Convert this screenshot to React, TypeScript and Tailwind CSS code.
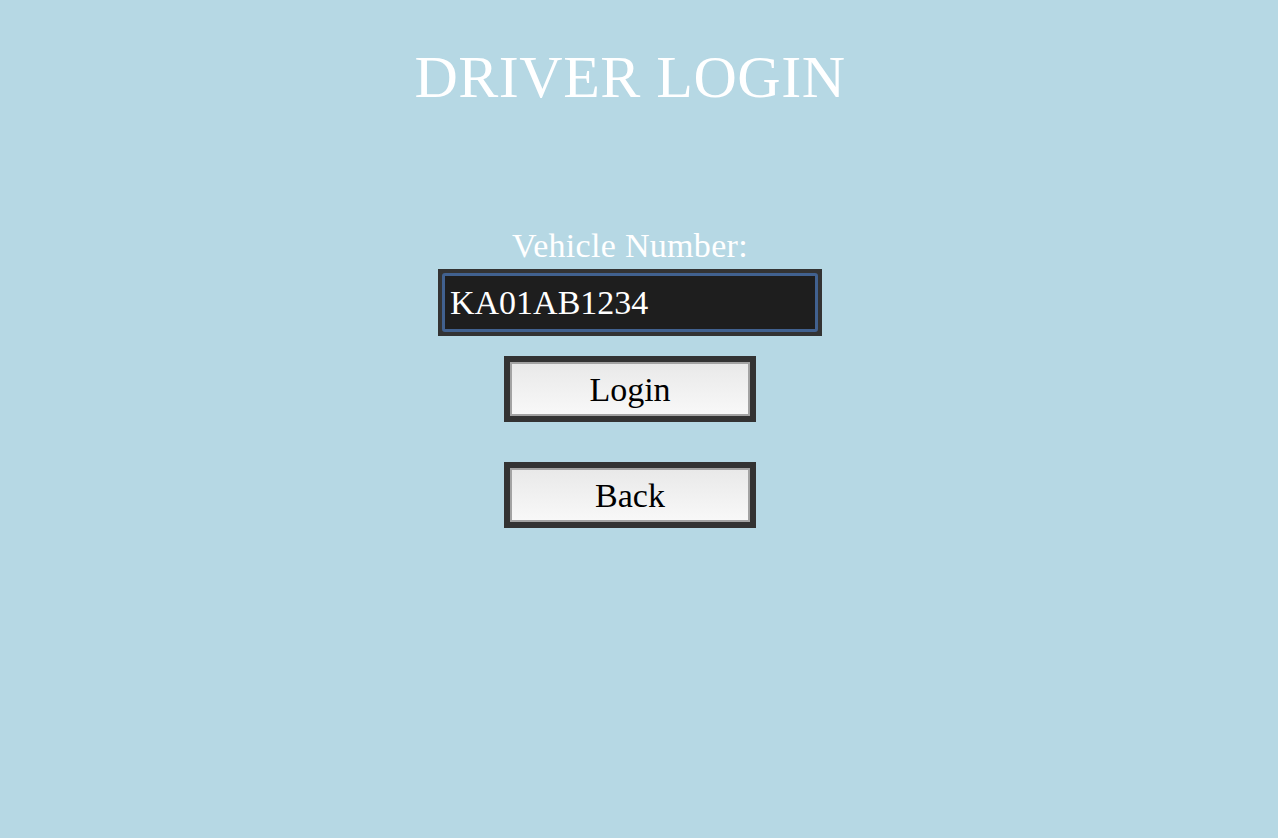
export default function App() {
  const serif = { fontFamily: '"Liberation Serif", "DejaVu Serif", serif' }

  return (
    <main className="min-h-[838px] w-full bg-[#b6d8e4] flex flex-col items-center pr-[18px] text-white" style={serif}>
      <h1 className="mt-[41px] text-[60px] leading-[72px] tracking-[0.5px]">DRIVER LOGIN</h1>

      <label className="mt-[113px] text-[34px] leading-[40px] tracking-[0.3px]">Vehicle Number:</label>

      <div className="mt-[3px] w-[384px] h-[67px] border-4 border-[#333] bg-[#333]">
        <input
          className="w-full h-full rounded-[3px] border-[3px] border-[#41618f] bg-[#1e1e1e] px-[5px] text-[34px] text-white outline-none"
          style={serif}
          defaultValue="KA01AB1234"
        />
      </div>

      <button className="mt-[20px] w-[252px] h-[66px] border-[6px] border-[#333] bg-[#333]" style={serif}>
        <span className="flex w-full h-full items-center justify-center border-2 border-[#a3a3a3] bg-gradient-to-b from-[#e9e9e9] to-[#f8f8f8] text-[34px] text-black">
          Login
        </span>
      </button>

      <button className="mt-[40px] w-[252px] h-[66px] border-[6px] border-[#333] bg-[#333]" style={serif}>
        <span className="flex w-full h-full items-center justify-center border-2 border-[#a3a3a3] bg-gradient-to-b from-[#e9e9e9] to-[#f8f8f8] text-[34px] text-black">
          Back
        </span>
      </button>
    </main>
  )
}
